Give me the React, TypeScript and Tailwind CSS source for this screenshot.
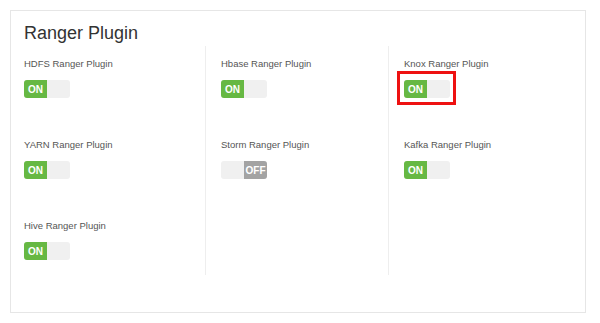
import React from "react";

type Plugin = { name: string; on: boolean; highlight?: boolean };

const COLUMNS: Plugin[][] = [
  [
    { name: "HDFS Ranger Plugin", on: true },
    { name: "YARN Ranger Plugin", on: true },
    { name: "Hive Ranger Plugin", on: true },
  ],
  [
    { name: "Hbase Ranger Plugin", on: true },
    { name: "Storm Ranger Plugin", on: false },
  ],
  [
    { name: "Knox Ranger Plugin", on: true, highlight: true },
    { name: "Kafka Ranger Plugin", on: true },
  ],
];

const Toggle = ({ on }: { on: boolean }) => (
  <div className="flex h-[18px] w-[46px] rounded-[3px] bg-[#f0f0f0] overflow-hidden">
    {on ? (
      <div className="flex w-[23px] items-center justify-center bg-[#66b843] text-[10px] font-bold text-white">
        ON
      </div>
    ) : (
      <>
        <div className="w-[23px]" />
        <div className="flex w-[23px] items-center justify-center bg-[#a3a3a3] text-[10px] font-bold text-white">
          OFF
        </div>
      </>
    )}
  </div>
);

const PluginItem = ({ plugin }: { plugin: Plugin }) => (
  <div className="flex flex-col gap-[9px]">
    <p className="text-[9.5px] leading-[14px] text-[#555]">{plugin.name}</p>
    <div className="relative w-[46px]">
      <Toggle on={plugin.on} />
      {plugin.highlight && (
        <div className="absolute -left-[7px] -top-[9px] h-[34px] w-[59px] border-[3px] border-[#ee1111]" />
      )}
    </div>
  </div>
);

export default function App() {
  return (
    <div
      className="h-[323px] w-[600px] bg-white p-[10px]"
      style={{ fontFamily: '"Liberation Sans", Arial, sans-serif' }}
    >
      <div className="h-[303px] w-[576px] border border-[#e6e6e6]">
        {/* Title */}
        <h1 className="h-[35px] pl-[13px] pt-[11px] text-[18px] leading-[22px] text-[#333]">
          Ranger Plugin
        </h1>

        {/* Plugin columns */}
        <div className="flex">
          {COLUMNS.map((col, i) => (
            <div
              key={i}
              className={`flex h-[229px] flex-col gap-[40px] pt-[11px] ${
                i === 0
                  ? "w-[195px] border-r border-[#eeeeee] pl-[13px]"
                  : i === 1
                  ? "w-[183px] border-r border-[#eeeeee] pl-[15px]"
                  : "flex-1 pl-[15px]"
              }`}
            >
              {col.map((p) => (
                <PluginItem key={p.name} plugin={p} />
              ))}
            </div>
          ))}
        </div>
      </div>
    </div>
  );
}
